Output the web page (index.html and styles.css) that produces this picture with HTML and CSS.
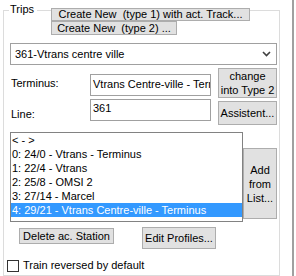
FILE: index.html
```html
<!DOCTYPE html>
<html>
<head>
<meta charset="utf-8">
<link rel="stylesheet" href="styles.css">
</head>
<body>
<div class="window">
  <div class="group">
    <div class="head">
      <span class="title">Trips</span>
      <div class="newbtns">
        <button class="btn b1">Create New  (type 1) with act. Track...</button>
        <button class="btn b2">Create New  (type 2) ...</button>
      </div>
    </div>
    <div class="combo">
      <span>361-Vtrans centre ville</span>
      <svg class="chev" width="9" height="6" viewBox="0 0 9 6"><polyline points="1,1 4.5,4.5 8,1" fill="none" stroke="#404040" stroke-width="1.6"/></svg>
    </div>
    <div class="form">
      <div class="fields">
        <div class="row r1"><span class="lbl">Terminus:</span><div class="input">Vtrans Centre-ville - Terminus</div></div>
        <div class="row r2"><span class="lbl">Line:</span><div class="input">361</div></div>
      </div>
      <div class="sidebtns">
        <button class="btn change">change<br>into Type 2</button>
        <button class="btn assist">Assistent...</button>
      </div>
    </div>
    <div class="listrow">
      <div class="list">
        <div class="item">&lt; - &gt;</div>
        <div class="item">0: 24/0 - Vtrans - Terminus</div>
        <div class="item">1: 22/4 - Vtrans</div>
        <div class="item">2: 25/8 - OMSI 2</div>
        <div class="item">3: 27/14 - Marcel</div>
        <div class="item sel">4: 29/21 - Vtrans Centre-ville - Terminus</div>
      </div>
      <button class="btn add">Add<br>from<br>List...</button>
    </div>
    <div class="actions">
      <button class="btn del">Delete ac. Station</button>
      <button class="btn edit">Edit Profiles...</button>
    </div>
    <div class="check"><span class="box"></span><span>Train reversed by default</span></div>
  </div>
</div>
</body>
</html>
```
FILE: styles.css
```css
* { box-sizing: border-box; }
html, body { margin: 0; padding: 0; background: #fff; }
body {
  width: 296px; height: 276px; overflow: hidden;
  font-family: "Liberation Sans", Arial, sans-serif;
  font-size: 11px; line-height: 13px; color: #000;
}
.window {
  width: 294px; height: 276px;
  border-right: 2px solid #a0a0a0;
  padding-top: 10px;
}
.group {
  margin-left: 3px;
  width: 277px; height: 266px;
  border: 1px solid #dcdcdc;
}
.head { display: flex; align-items: flex-start; margin-top: -11px; }
.title {
  margin-top: 3px; margin-left: 5px; width: 28px;
  padding-left: 1px; background: #fff;
}
.newbtns { margin-left: 14px; margin-top: 8px; display: flex; flex-direction: column; align-items: flex-start; }
.btn {
  font: inherit; color: #000; line-height: 13px;
  background: #e1e1e1; border: 1px solid #adadad;
  padding: 0; margin: 0; white-space: pre; text-align: center;
}
.b1 { width: 199px; height: 13px; line-height: 11px; }
.b2 { width: 126px; height: 14px; line-height: 12px; }
.combo {
  margin: 8px 0 0 6px; width: 267px; height: 22px;
  border: 1px solid #a0a0a0; background: #fff;
  display: flex; align-items: center; justify-content: space-between;
  padding: 0 5px 0 4px;
}
.form { display: flex; align-items: flex-start; margin-top: 3px; }
.fields { margin-left: 7px; }
.row { display: flex; align-items: center; height: 22px; }
.r1 { margin-top: 6px; }
.r2 { margin-top: 3px; }
.lbl { width: 79px; }
.r1 .lbl { margin-top: -4px; }
.r2 .lbl { margin-top: 8px; }
.input {
  width: 121px; height: 22px; border: 1px solid #a0a0a0;
  padding: 3px 0 0 2px; white-space: nowrap; overflow: hidden;
}
.r2 .input { padding-top: 2px; }
.sidebtns { margin-left: 7px; display: flex; flex-direction: column; }
.change { width: 59px; height: 30px; line-height: 14px; }
.assist { width: 59px; height: 24px; margin-top: 3px; }
.listrow { display: flex; align-items: flex-start; margin-top: 7px; margin-left: 6px; }
.list { width: 233px; height: 90px; border: 1px solid #828282; background: #fff; }
.item { height: 14px; line-height: 14px; padding-left: 1px; white-space: nowrap; }
.item.sel { background: #3399ff; color: #fff; }
.add { width: 34px; height: 71px; margin-top: 16px; line-height: 14px; }
.actions { display: flex; align-items: flex-start; margin-top: 6px; margin-left: 15px; }
.del { width: 95px; height: 16px; line-height: 14px; }
.edit { width: 74px; height: 22px; margin-left: 28px; margin-top: -1px; }
.check { display: flex; align-items: center; margin-top: 10px; margin-left: 3px; }
.box { width: 12px; height: 12px; border: 1px solid #333; background: #fff; margin-right: 4px; }
```
